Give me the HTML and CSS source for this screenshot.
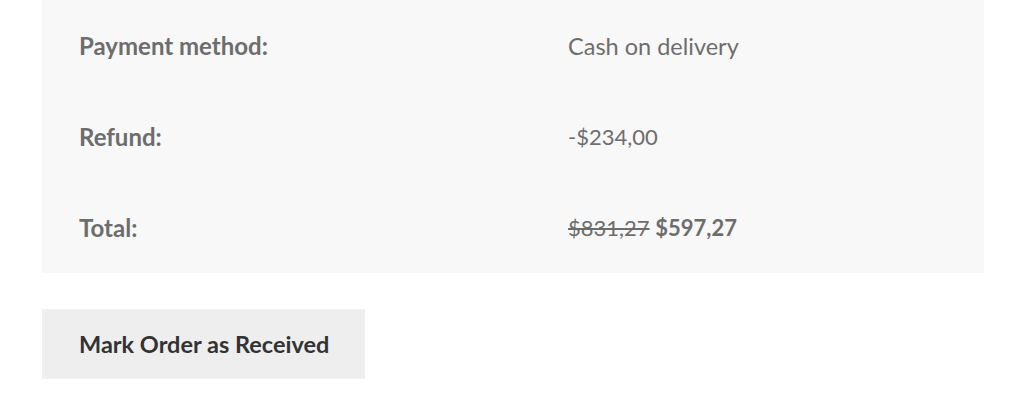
FILE: index.html
```html
<!DOCTYPE html>
<html>
<head>
<meta charset="utf-8">
<link rel="stylesheet" href="styles.css">
</head>
<body>
<div class="page">
  <table class="totals">
    <tr>
      <th>Payment method:</th>
      <td>Cash on delivery</td>
    </tr>
    <tr>
      <th>Refund:</th>
      <td class="amount">-$234,00</td>
    </tr>
    <tr>
      <th>Total:</th>
      <td class="amount"><del>$831,27</del> <strong>$597,27</strong></td>
    </tr>
  </table>
  <button class="btn">Mark Order as Received</button>
</div>
</body>
</html>
```
FILE: styles.css
```css
html, body {
  margin: 0;
  padding: 0;
  background: #fff;
}
body {
  font-family: Lato, "Liberation Sans", sans-serif;
  color: #6d6d6d;
}
.page {
  padding: 0 40px 0 42px;
}
.totals {
  width: 942px;
  border-collapse: collapse;
  background: #f8f8f8;
  table-layout: fixed;
}
.totals th, .totals td {
  height: 91px;
  padding: 0 0 0 37px;
  text-align: left;
  vertical-align: middle;
  white-space: nowrap;
}
.totals th {
  width: 452px;
  font-weight: 700;
  font-size: 24px;
}
.totals td {
  font-weight: 400;
  font-size: 23.5px;
}
.totals td.amount {
  font-size: 22px;
}
.totals del {
  text-decoration: line-through;
}
.totals strong {
  font-weight: 700;
}
.btn {
  display: block;
  margin-top: 36px;
  width: 323px;
  height: 70px;
  padding: 0 0 0 37px;
  text-align: left;
  border: 0;
  background: #eeeeee;
  color: #333333;
  font-family: Lato, "Liberation Sans", sans-serif;
  font-weight: 700;
  font-size: 23.5px;
  white-space: nowrap;
  cursor: pointer;
}
```
